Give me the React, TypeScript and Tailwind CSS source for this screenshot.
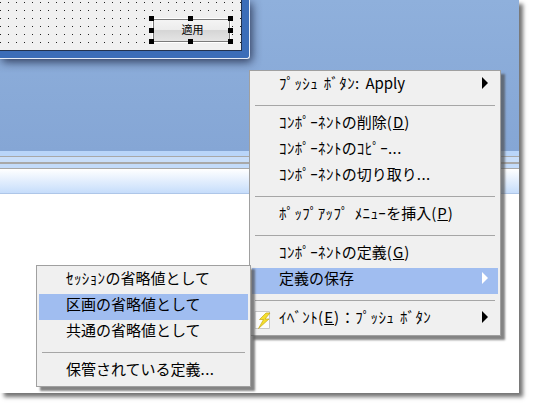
import type { ReactNode } from 'react'

const jp = "font-['Noto_Sans_CJK_JP','Liberation_Sans',sans-serif]"

function Item({ children, arrow, active }: { children: ReactNode; arrow?: boolean; active?: boolean }) {
  return (
    <div className={`flex h-[26px] items-center justify-between pb-[7px] pl-[27px] text-[15px] leading-none text-black ${active ? 'bg-[#a0bdf0]' : ''}`}>
      <span className="whitespace-nowrap">{children}</span>
      {arrow && (
        <span className={`mr-2.5 h-0 w-0 border-y-[6px] border-l-[6px] border-y-transparent ${active ? 'border-l-white' : 'border-l-black'}`} />
      )}
    </div>
  )
}

// half-width kana runs a little wider in the original font
function Kana({ children }: { children: ReactNode }) {
  return <span className="tracking-[0.4px] [word-spacing:2px]">{children}</span>
}

function Key({ k }: { k: string }) {
  return <span className="tracking-[1px]">(<u>{k}</u>)</span>
}

function Sep() {
  return (
    <div className="h-[13px] px-[3px] pt-1.5">
      <div className="h-px bg-[#a6a6a6]" />
    </div>
  )
}

function Handle({ className }: { className: string }) {
  return <span className={`absolute size-[5px] bg-black ${className}`} />
}

function Bolt() {
  return (
    <span className="absolute left-[2px] top-[3px]">
      <svg width="18" height="20" viewBox="0 0 18 20">
        <path d="M1 1.5h14.5V18.5H1z" fill="#fcfcfc" stroke="#c8c8c8" />
        <path d="M12 3 5.500 9.500h4L4.500 18.500 15 9h-4L16 3z" fill="#f5df2e" stroke="#c4a818" strokeWidth=".7" />
      </svg>
    </span>
  )
}

export default function App() {
  return (
    <div className={`relative h-[409px] w-[533px] overflow-hidden bg-white ${jp}`}>
      <div className="flex h-[393px] w-[519px] flex-col bg-white shadow-[4px_4px_4px_rgba(70,70,70,0.75)]">
        <div className="h-[151px] bg-gradient-to-b from-[#8fb0dc] to-[#85a6d5]">
          <div className="h-[59px] w-[250px] rounded-br-[3px] border-b border-r border-[#e8eef8] bg-[#3c6db8] pb-[7px] pr-[7px] shadow-[2px_3px_10px_rgba(30,40,70,0.85)]">
            <div className="flex h-full justify-end border-b border-r border-[#23324e] bg-[#f0f0f0] bg-[conic-gradient(at_1px_1px,transparent_270deg,#222_270deg)] bg-[length:8px_8px] bg-[position:0px_2px] pr-[11px] pt-[19px]">
              <div className="relative h-[23px] w-[77px]">
                <button className="flex h-full w-full items-center justify-center border border-[#7a7a7a] bg-[linear-gradient(#f4f4f4,#ececec_48%,#d6d6d6_50%,#e4e4e4)] pb-[2px] pl-[2px] text-[11px] leading-none text-black shadow-[0_0_0_1px_#fff]">
                  適用
                </button>
                <Handle className="-left-[4px] -top-[3px]" />
                <Handle className="left-[35px] -top-[3px]" />
                <Handle className="-right-[3px] -top-[3px]" />
                <Handle className="-left-[4px] top-[9px]" />
                <Handle className="-right-[3px] top-[9px]" />
                <Handle className="-left-[4px] -bottom-[2px]" />
                <Handle className="left-[35px] -bottom-[2px]" />
                <Handle className="-right-[3px] -bottom-[2px]" />
              </div>
            </div>
          </div>
        </div>
        <div className="h-[6px] border-b border-[#a8a8a8] bg-[#b9d5f9]" />
        <div className="h-[7px] border-b-2 border-[#a8a8a8] bg-[#c9def9]" />
        <div className="h-[5px] border-b border-[#a8a8a8] bg-[#c3dbfa]" />
        <div className="h-[25px] border-b border-[#aec6e8] bg-gradient-to-b from-white to-[#c6ddfb]" />
      </div>

      <div className="absolute left-[249px] top-[70px] h-[266px] w-[252px] border border-[#a0a0a0] bg-[#f0f0f0] px-[2px] pt-[2px] shadow-[4px_4px_2px_rgba(80,80,80,0.7)]">
        <Item arrow><Kana>ﾌﾟｯｼｭ ﾎﾞﾀﾝ: </Kana>Apply</Item>
        <Sep />
        <Item><Kana>ｺﾝﾎﾟｰﾈﾝﾄ</Kana>の削除<Key k="D" /></Item>
        <Item><Kana>ｺﾝﾎﾟｰﾈﾝﾄ</Kana>の<Kana>ｺﾋﾟｰ...</Kana></Item>
        <Item><Kana>ｺﾝﾎﾟｰﾈﾝﾄ</Kana>の切り取り<Kana>...</Kana></Item>
        <Sep />
        <Item><Kana>ﾎﾟｯﾌﾟｱｯﾌﾟ ﾒﾆｭｰ</Kana>を挿入<Key k="P" /></Item>
        <Sep />
        <Item><Kana>ｺﾝﾎﾟｰﾈﾝﾄ</Kana>の定義<Key k="G" /></Item>
        <Item arrow active>定義の保存</Item>
        <Sep />
        <div className="relative">
          <Bolt />
          <Item arrow><Kana>ｲﾍﾞﾝﾄ</Kana><Key k="E" />：<Kana>ﾌﾟｯｼｭ ﾎﾞﾀﾝ</Kana></Item>
        </div>
      </div>

      <div className="absolute left-[36px] top-[265px] h-[122px] w-[215px] border border-[#a0a0a0] bg-[#f0f0f0] px-[2px] pt-[2px] shadow-[4px_4px_2px_rgba(80,80,80,0.7)]">
        <Item><Kana>ｾｯｼｮﾝ</Kana>の省略値として</Item>
        <Item active>区画の省略値として</Item>
        <Item>共通の省略値として</Item>
        <Sep />
        <Item>保管されている定義<Kana>...</Kana></Item>
      </div>
    </div>
  )
}
